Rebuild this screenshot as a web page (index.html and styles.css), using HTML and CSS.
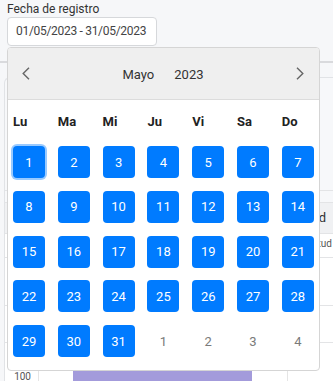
FILE: index.html
```html
<!DOCTYPE html>
<html lang="es">
<head>
  <meta charset="UTF-8" />
  <meta name="viewport" content="width=device-width, initial-scale=1.0"/>
  <title>Registros</title>
  <link rel="stylesheet" href="styles.css">
</head>
<body>

  <div class="filter-bar">
    <div class="filter">
      <label class="filter-label">Fecha de registro</label>
      <div class="date-input">01/05/2023 - 31/05/2023</div>

      <div class="calendar">
        <div class="cal-header">
          <svg class="cal-arrow" width="8" height="13" viewBox="0 0 8 13"><path d="M7 0.8 L1.2 6.5 L7 12.2" /></svg>
          <div class="cal-title"><span>Mayo</span><span>2023</span></div>
          <svg class="cal-arrow" width="8" height="13" viewBox="0 0 8 13"><path d="M1 0.8 L6.8 6.5 L1 12.2" /></svg>
        </div>

        <div class="cal-weekdays">
          <span>Lu</span><span>Ma</span><span>Mi</span><span>Ju</span><span>Vi</span><span>Sa</span><span>Do</span>
        </div>

        <div class="cal-days" id="cal-days"></div>
      </div>
    </div>
  </div>

  <div class="panel">
    <div class="panel-top"></div>
    <div class="table-head-gap"></div>
    <div class="table-row table-head">
      <span class="cell-main"></span>
      <span class="cell-last">Cantidad</span>
    </div>
    <div class="table-row row-sub">
      <span class="cell-main"></span>
      <span class="cell-last">Solicitud</span>
    </div>
    <div class="table-row row-tall"></div>
    <div class="table-row row-mid"></div>

    <div class="chart">
      <span class="chart-axis">100</span>
      <div class="chart-plot">
        <div class="chart-bar"></div>
        <div class="chart-grid"></div>
      </div>
    </div>
  </div>

  <script>
    // Mayo 2023 empieza en lunes
    const days = document.getElementById('cal-days');
    for (let d = 1; d <= 31; d++) {
      const el = document.createElement('span');
      el.className = 'day in-range' + (d === 1 ? ' focused' : '');
      el.textContent = d;
      days.appendChild(el);
    }
    for (let d = 1; d <= 4; d++) {
      const el = document.createElement('span');
      el.className = 'day other-month';
      el.textContent = d;
      days.appendChild(el);
    }
  </script>

</body>
</html>
```

FILE: styles.css
```css
body {
  font-family: Roboto, 'Noto Sans', sans-serif;
  background-color: #f6f7f9;
  margin: 0;
  padding: 0;
  overflow: hidden;
}
.filter-bar {
  height: 61px;
  border-bottom: 2px solid #d9dadd;
}
.filter {
  position: relative;
  padding: 1px 7px 0;
}
.filter-label {
  display: block;
  font-size: 12px;
  line-height: 16px;
  color: #333;
}
.date-input {
  width: 150px;
  height: 29px;
  box-sizing: border-box;
  border: 1px solid #d6d8db;
  border-radius: 4px;
  background-color: #fff;
  padding-left: 8px;
  font-size: 12px;
  letter-spacing: -0.3px;
  line-height: 27px;
  white-space: nowrap;
  color: #444;
}
.calendar {
  position: absolute;
  top: 47px;
  left: 7px;
  width: 313px;
  height: 324px;
  box-sizing: border-box;
  background-color: #fff;
  border: 1px solid #d5d5d5;
  border-radius: 4px;
  z-index: 10;
}
.cal-header {
  height: 51px;
  background-color: #efefef;
  border-bottom: 1px solid #dcdcdc;
  border-radius: 3px 3px 0 0;
  display: flex;
  align-items: center;
  justify-content: space-between;
  padding: 0 15px 0 14px;
}
.cal-arrow path {
  fill: none;
  stroke: #666;
  stroke-width: 1.4;
}
.cal-title {
  display: flex;
  gap: 20px;
  font-size: 13px;
  color: #333;
  margin-top: 1px;
}
.cal-weekdays,
.cal-days {
  display: grid;
  grid-template-columns: repeat(7, 32px);
  column-gap: 12.8px;
  padding-left: 5px;
}
.cal-weekdays {
  margin-top: 7px;
  height: 30px;
  line-height: 30px;
  font-size: 13px;
  font-weight: bold;
  color: #222;
}
.cal-days {
  row-gap: 12.75px;
  padding-top: 9px;
}
.day {
  width: 32px;
  height: 32px;
  border-radius: 4px;
  display: flex;
  align-items: center;
  justify-content: center;
  font-size: 13px;
}
.day.in-range {
  background-color: #007bff;
  color: #fff;
}
.day.focused {
  box-shadow: 0 0 0 2px rgba(0, 123, 255, 0.4);
}
.day.other-month {
  color: #7a7a7a;
}
.panel {
  margin: 14px 0 0 4px;
  border: 1px solid #e1e3e6;
  border-right: none;
  border-radius: 6px 0 0 0;
  background-color: #f7f8fa;
}
.panel-top {
  height: 112px;
}
.table-head-gap {
  height: 11px;
  border-top: 1px solid #e3e4e6;
}
.table-row {
  display: flex;
  border-top: 1px solid #e3e4e6;
}
.cell-main {
  flex: 1;
}
.cell-last {
  width: 100px;
  text-align: right;
}
.table-head {
  height: 30px;
  background-color: #f0f1f3;
  font-size: 13px;
  line-height: 30px;
  color: #333;
}
.table-head .cell-last {
  padding-right: 7px;
}
.row-sub {
  height: 23px;
  font-size: 10px;
  line-height: 20px;
  color: #555;
  background-color: #fff;
}
.row-sub .cell-last {
  padding-right: 1px;
}
.row-tall {
  height: 47px;
  background-color: #fff;
}
.row-mid {
  height: 36px;
  background-color: #fff;
  border-bottom: 1px solid #e3e4e6;
}
.chart {
  display: flex;
  height: 60px;
  background-color: #fff;
}
.chart-axis {
  width: 26px;
  padding-top: 28px;
  text-align: right;
  font-size: 10px;
  color: #555;
}
.chart-plot {
  flex: 1;
  display: flex;
  margin-left: 7px;
  border-left: 1px solid #e5e5e5;
}
.chart-bar {
  width: 179px;
  margin-left: 34px;
  background-color: #a39bdb;
}
.chart-grid {
  margin-left: 35px;
  border-left: 1px solid #e5e5e5;
}
```
